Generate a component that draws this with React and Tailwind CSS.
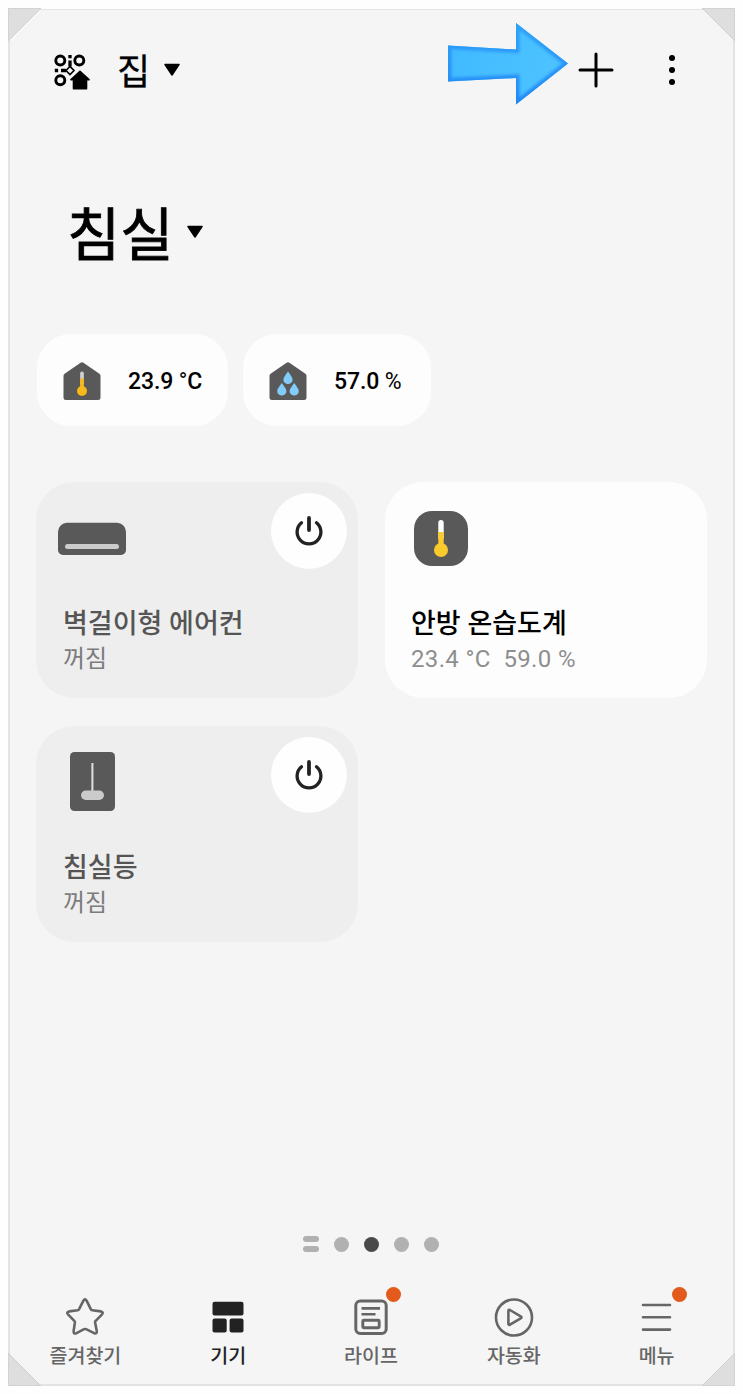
import { clsx } from 'clsx'

const Caret = ({ className }) => (
    <svg viewBox="0 0 18 14" className={className}>
        <path d="M2 1.500h14L9 12z" fill="#000" stroke="#000" strokeWidth="1.500" strokeLinejoin="round" />
    </svg>
)

const PlaceIcon = () => (
    <svg width="38" height="38" viewBox="0 0 38 38" fill="none" stroke="#000" className="mt-[3px]">
        <circle cx="6.300" cy="7.500" r="4.500" strokeWidth="2.900" />
        <circle cx="25.300" cy="7.500" r="4.500" strokeWidth="2.900" />
        <circle cx="6.300" cy="27.200" r="4.500" strokeWidth="2.900" />
        <path d="M16 2v3.300M16 7.500v6M.8 17.500h3.300M7 17.500h5" strokeWidth="3.300" />
        <path d="M12 17.500l4-4 4 4-4 4z" fill="#f5f5f5" strokeWidth="1.600" />
        <path d="M26 18.400l9 8.300h-2.500v9H19.500v-9H17z" fill="#000" strokeWidth="1.600" strokeLinejoin="round" />
    </svg>
)

const ArrowMark = () => (
    <svg width="122" height="84" viewBox="0 0 122 84" className="absolute left-[437px] top-[12px]">
        <defs>
            <linearGradient id="arrowFill" x1="0" y1="0" x2="0.9" y2="0.2">
                <stop offset="0" stopColor="#3fb9ff" />
                <stop offset="1" stopColor="#4cc2ff" />
            </linearGradient>
            <linearGradient id="arrowEdge" x1="0" y1="0" x2="0" y2="1">
                <stop offset="0" stopColor="#2fa2f8" />
                <stop offset="1" stopColor="#2287f6" />
            </linearGradient>
            <clipPath id="arrowClip">
                <path d="M1 23.500L69 27.500V1l52 40.500L69 82.500V56L1 59.500z" />
            </clipPath>
            <filter id="arrowSoft">
                <feGaussianBlur stdDeviation="1.500" />
            </filter>
        </defs>
        <g clipPath="url(#arrowClip)">
            <rect width="122" height="84" fill="url(#arrowFill)" />
            <path
                d="M1 23.500L69 27.500V1l52 40.500L69 82.500V56L1 59.500z"
                fill="none"
                stroke="url(#arrowEdge)"
                strokeWidth="7"
                filter="url(#arrowSoft)"
            />
        </g>
    </svg>
)

const House = () => (
    <path d="M3 14.800L19 3.800l16 11V36.500H3z" fill="#595959" stroke="#595959" strokeWidth="5" strokeLinejoin="round" />
)

const HouseTemp = () => (
    <svg width="38" height="40" viewBox="0 0 38 40">
        <House />
        <rect x="17.200" y="10.500" width="3.600" height="14" rx="1.800" fill="#d2d2d2" />
        <path d="M17.200 17.500h3.600v9h-3.600z" fill="#f8b71b" />
        <circle cx="19" cy="30" r="5" fill="#f8b71b" />
    </svg>
)

const HouseHumidity = () => (
    <svg width="38" height="40" viewBox="0 0 38 40" fill="#83cbf8">
        <House />
        <path id="drop" d="M19 10.500c2.200 3.400 4.600 5.600 4.600 8.200a4.600 4.300 0 0 1-9.200 0c0-2.600 2.400-4.800 4.600-8.200z" />
        <use href="#drop" x="-6.200" y="11.500" />
        <use href="#drop" x="6.200" y="11.500" />
    </svg>
)

const AirconIcon = () => (
    <svg width="68" height="34" viewBox="0 0 68 34">
        <path d="M9 .8h50a9 9 0 0 1 9 9V28a5 5 0 0 1-5 5H5a5 5 0 0 1-5-5V9.800a9 9 0 0 1 9-9z" fill="#595959" />
        <rect x="7" y="22" width="54" height="5" rx="2.500" fill="#cbcbcb" />
    </svg>
)

const ThermometerIcon = () => (
    <svg width="54" height="55" viewBox="0 0 54 55">
        <rect width="54" height="55" rx="18" fill="#595959" />
        <rect x="24.300" y="9" width="5.400" height="20" rx="2.700" fill="#fff" />
        <path d="M24.300 21h5.400v14h-5.400z" fill="#fbca2c" />
        <circle cx="27" cy="39" r="7" fill="#fbca2c" />
    </svg>
)

const LampIcon = () => (
    <svg width="45" height="59" viewBox="0 0 45 59">
        <rect width="45" height="59" rx="4.500" fill="#595959" />
        <path d="M22.400 11v29" stroke="#e0e0e0" strokeWidth="2" />
        <rect x="11" y="38.500" width="23" height="9.500" rx="4.700" fill="#cbcbcb" />
    </svg>
)

const PowerButton = () => (
    <button className="flex size-[76px] items-center justify-center rounded-full bg-[#fefefe]">
        <svg width="30" height="32" viewBox="0 0 30 32" fill="none" stroke="#222" strokeWidth="3.300" strokeLinecap="round">
            <path d="M7.500 7.800a11.900 11.900 0 1 0 15 0" />
            <path d="M15 3v12" strokeWidth="3.800" />
        </svg>
    </button>
)

const devices = [
    { name: '벽걸이형 에어컨', status: '꺼짐', icon: <AirconIcon />, iconBox: 'left-[22px] top-[40px]', power: true },
    { name: '안방 온습도계', status: '23.4 °C  59.0 %', icon: <ThermometerIcon />, iconBox: 'left-[29px] top-[29px]', on: true },
    { name: '침실등', status: '꺼짐', icon: <LampIcon />, iconBox: 'left-[34px] top-[26px]', power: true },
]

const DeviceCard = ({ device }) => (
    <article className={clsx('flex h-[216px] flex-col rounded-[38px]', device.on ? 'bg-[#fdfdfd]' : 'bg-[#eeeeee]')}>
        <div className="flex h-[118px] items-start justify-between pr-[11px] pt-[11px]">
            <div className={clsx('relative -mt-[11px]', device.iconBox)}>{device.icon}</div>
            {device.power && <PowerButton />}
        </div>
        <h2
            className={clsx(
                'h-12 text-[27px] leading-[48px] font-medium',
                device.on ? 'pl-[26px] text-black' : 'pl-[27px] text-[#555555]',
            )}
        >
            {device.name}
        </h2>
        <p
            className={clsx(
                '-mt-px text-[24px] leading-6 whitespace-pre',
                device.on ? 'pl-[26px] tracking-[0.35px] text-[#8e8e8e]' : 'pl-[27px] text-[#7c7c7c]',
            )}
        >
            {device.status}
        </p>
    </article>
)

const StarIcon = () => (
    <svg width="40" height="40" viewBox="0 0 40 40" fill="none" stroke="#666" strokeWidth="2.600" strokeLinejoin="round">
        <path d="M18.300 3.900q1.700-3 3.400 0l4.100 8.300q.4.900 1.500 1l8.600 1.200q3 .7 1.100 3l-6.300 6.400q-.8.700-.6 1.700l1.700 8.700q.2 3.100-2.700 2l-8-4q-1-.5-2 0l-7.600 4q-3 1.200-2.900-1.900l1.300-8.800q.1-1-.6-1.700l-6.300-6.400q-1.900-2.300 1.200-3l8.400-1.200q1-.2 1.500-1z" />
    </svg>
)

const DevicesIcon = () => (
    <svg width="40" height="40" viewBox="0 0 40 40" fill="#222">
        <rect x="4.500" y="4.700" width="31" height="13.800" rx="2" />
        <rect x="4.500" y="21.600" width="14.200" height="14" rx="2" />
        <rect x="21.600" y="21.600" width="13.900" height="14" rx="2" />
    </svg>
)

const LifeIcon = () => (
    <svg width="40" height="40" viewBox="0 0 40 40" fill="none" stroke="#666">
        <rect x="4.800" y="4" width="30.400" height="32.500" rx="4.500" strokeWidth="3" />
        <path d="M10.500 11.400h18.500M10.500 17.300h14" strokeWidth="2.600" />
        <rect x="11.800" y="23.200" width="16.400" height="7.600" rx="1" strokeWidth="2.900" />
    </svg>
)

const PlayIcon = () => (
    <svg width="40" height="40" viewBox="0 0 40 40" fill="none" stroke="#666" strokeWidth="2.600" strokeLinejoin="round">
        <circle cx="20" cy="20.500" r="18" />
        <path d="M14.400 14q0-1.600 1.500-1l10.800 6.300q1.700 1 0 2L16 27.700q-1.500.6-1.600-1z" />
    </svg>
)

const MenuIcon = () => (
    <svg width="40" height="40" viewBox="0 0 40 40" stroke="#666" strokeWidth="2.600" strokeLinecap="round">
        <path d="M6 8h27M6 20.300h27M6 32.600h27" />
    </svg>
)

const tabs = [
    { label: '즐겨찾기', icon: <StarIcon /> },
    { label: '기기', icon: <DevicesIcon />, active: true },
    { label: '라이프', icon: <LifeIcon />, badge: true },
    { label: '자동화', icon: <PlayIcon /> },
    { label: '메뉴', icon: <MenuIcon />, badge: true },
]

const Corner = ({ className }) => (
    <svg width="33" height="33" viewBox="0 0 33 33" className={clsx('absolute', className)}>
        <path d="M0 0h33L0 33z" fill="#dedede" />
        <path d="M.5 33V.5H33" fill="none" stroke="#d2d2d2" />
        <path d="M33 0L0 33" stroke="#d0d0d0" />
    </svg>
)

const App = () => {
    return (
        <div className="h-[1394px] w-[743px] bg-[#fefefe] pl-2 pt-[9px] font-['Roboto','Noto_Sans_CJK_KR',sans-serif]">
            <main className="relative flex h-[1377px] w-[727px] flex-col border-2 border-t border-[#e3e3e3] bg-[#f5f5f5]">
                <Corner className="-left-[2px] -top-[2px]" />
                <Corner className="-right-[2px] -top-[2px] rotate-90" />
                <Corner className="-bottom-[2px] -right-[2px] rotate-180" />
                <Corner className="-bottom-[2px] -left-[2px] -rotate-90" />

                <header className="flex h-[120px] items-center pl-[44px] pr-[52px]">
                    <PlaceIcon />
                    <span className="ml-[25px] pt-[5px] text-[36px] leading-none text-black [-webkit-text-stroke:0.3px_#000]">집</span>
                    <Caret className="ml-[13px] h-[14px] w-[18px]" />
                    <button className="ml-auto">
                        <svg width="36" height="36" viewBox="0 0 36 36" stroke="#000" strokeWidth="3" strokeLinecap="round">
                            <path d="M18 2v32M2 18h32" />
                        </svg>
                    </button>
                    <button className="ml-[49px]">
                        <svg width="18" height="36" viewBox="0 0 18 36">
                            <circle cx="9" cy="6" r="3" />
                            <circle cx="9" cy="18" r="3" />
                            <circle cx="9" cy="30" r="3" />
                        </svg>
                    </button>
                </header>
                <ArrowMark />

                <div className="flex h-[204px] items-center pl-[57px]">
                    <h1 className="pt-2 text-[58px] leading-none text-black [-webkit-text-stroke:0.8px_#000]">침실</h1>
                    <Caret className="ml-[12px] h-[14px] w-[18px]" />
                </div>

                <section className="flex gap-[15px] pl-[27px] text-[23px] font-medium text-black">
                    <div className="flex h-[92px] w-[191px] items-center gap-[27px] rounded-[34px] bg-[#fdfdfd] pl-[26px] pt-[2px]">
                        <HouseTemp />
                        <span className="pt-[2px] tracking-[-0.1px]">
                            23.9 <span className="font-normal">°</span>C
                        </span>
                    </div>
                    <div className="flex h-[92px] w-[188px] items-center gap-[27px] rounded-[34px] bg-[#fdfdfd] pl-[26px] pt-[2px]">
                        <HouseHumidity />
                        <span className="pt-[2px] tracking-[-0.1px]">
                            57.0 <span className="font-normal">%</span>
                        </span>
                    </div>
                </section>

                <section className="mt-14 grid grid-cols-[322px_322px] gap-x-[27px] gap-y-7 pl-[26px]">
                    {devices.map((device) => (
                        <DeviceCard key={device.name} device={device} />
                    ))}
                </section>

                <div className="mt-auto flex items-center gap-[15px] pl-[293px]">
                    <span className="flex flex-col gap-1">
                        <i className="h-[6px] w-4 rounded-full bg-[#b1b1b1]" />
                        <i className="h-[6px] w-4 rounded-full bg-[#b1b1b1]" />
                    </span>
                    <i className="size-[15px] rounded-full bg-[#b1b1b1]" />
                    <i className="size-[15px] rounded-full bg-[#4a4a4a]" />
                    <i className="size-[15px] rounded-full bg-[#b1b1b1]" />
                    <i className="size-[15px] rounded-full bg-[#b1b1b1]" />
                </div>

                <nav className="ml-[4px] mt-[45px] grid h-[87px] w-[714px] grid-cols-5">
                    {tabs.map((tab) => (
                        <a key={tab.label} className="flex flex-col items-center">
                            <span className="relative">
                                {tab.icon}
                                {tab.badge && (
                                    <i className="absolute -right-[10px] -top-[10px] size-[15px] rounded-full bg-[#e25a1c]" />
                                )}
                            </span>
                            <span
                                className={clsx(
                                    'mt-[8px] text-[19.500px] leading-6 font-medium whitespace-nowrap',
                                    tab.active ? 'text-[#222222]' : 'text-[#666666]',
                                )}
                            >
                                {tab.label}
                            </span>
                        </a>
                    ))}
                </nav>
            </main>
        </div>
    )
}

export default App
